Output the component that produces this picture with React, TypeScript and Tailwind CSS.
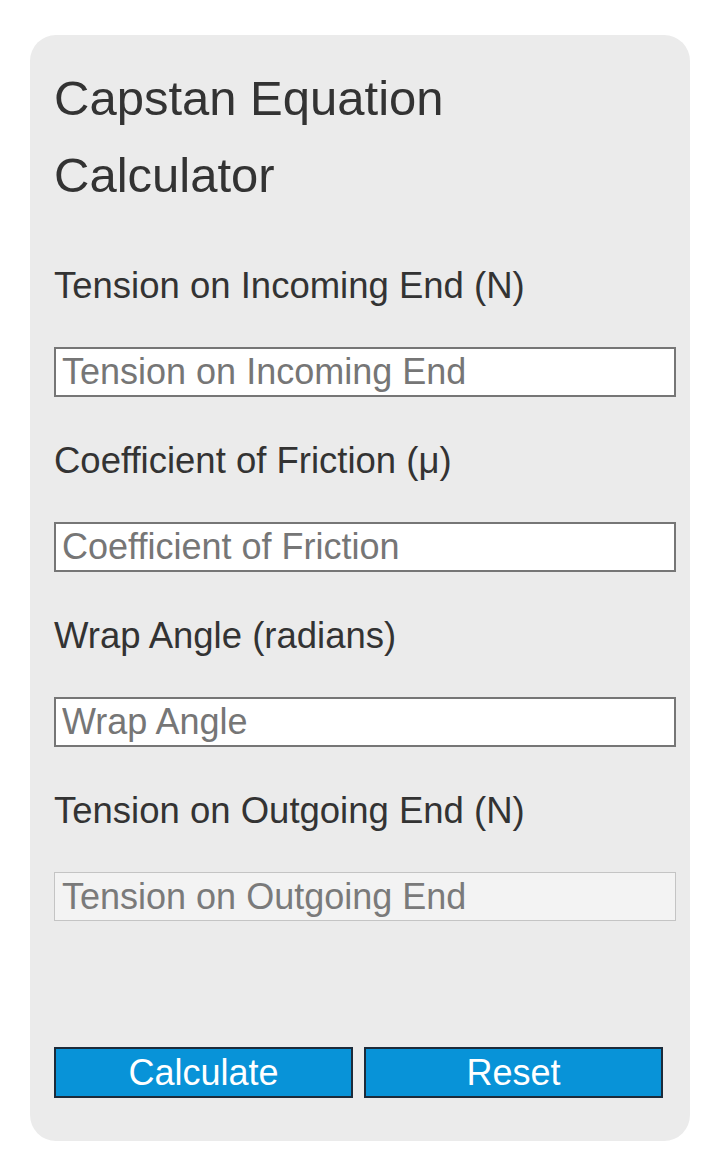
import React from 'react';

const fields = [
  { label: 'Tension on Incoming End (N)', placeholder: 'Tension on Incoming End' },
  { label: 'Coefficient of Friction (μ)', placeholder: 'Coefficient of Friction' },
  { label: 'Wrap Angle (radians)', placeholder: 'Wrap Angle' },
];

const App: React.FC = () => {
  return (
    <div className="min-h-[1173px] w-[720px] bg-white pt-[35px] pl-[30px] font-['Liberation_Sans',Arial,sans-serif]">
      <div className="w-[660px] rounded-[26px] bg-[#ebebeb] px-[24px] pt-[25px] pb-[43px]">
        <h1 className="text-[49px] leading-[77px] font-normal text-[#333333]">
          Capstan Equation
          <br />
          Calculator
        </h1>

        <div className="mt-[51px]">
          {fields.map((f) => (
            <div key={f.label}>
              <label className="block text-[36.5px] leading-[41px] text-[#333333] mb-[41px]">{f.label}</label>
              <input
                type="text"
                placeholder={f.placeholder}
                className="mb-[43px] block h-[50px] w-[622px] border-2 border-[#767676] bg-white px-[6px] text-[36px] leading-[41px] text-[#333333] placeholder:text-[#767676] outline-none"
              />
            </div>
          ))}
          <label className="block text-[36.5px] leading-[41px] text-[#333333] mb-[41px]">Tension on Outgoing End (N)</label>
          <input
            type="text"
            readOnly
            placeholder="Tension on Outgoing End"
            className="block h-[49px] w-[622px] border border-[#c4c4c4] bg-[#f3f3f3] px-[7px] text-[36px] leading-[41px] text-[#333333] placeholder:text-[#7a7a7a] outline-none"
          />
        </div>

        <div className="mt-[126px] flex gap-[11px]">
          <button className="h-[51px] w-[299px] border-2 border-[#1c2b3a] bg-[#0893d8] text-[36px] leading-none text-white">
            Calculate
          </button>
          <button className="h-[51px] w-[299px] border-2 border-[#1c2b3a] bg-[#0893d8] text-[36px] leading-none text-white">
            Reset
          </button>
        </div>
      </div>
    </div>
  );
};

export default App;
